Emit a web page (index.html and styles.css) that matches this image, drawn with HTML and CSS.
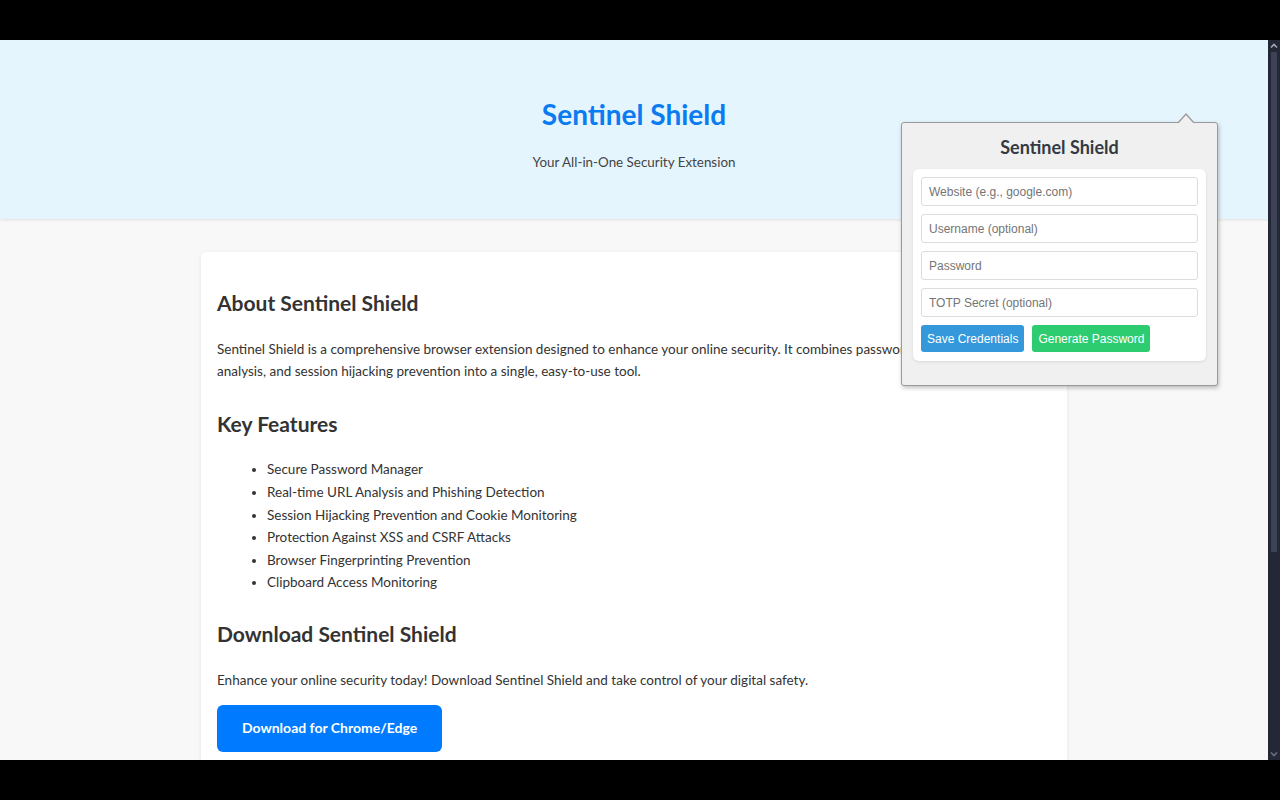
FILE: index.html
```html
<!DOCTYPE html>
<html lang="en">
<head>
<meta charset="utf-8">
<title>Sentinel Shield</title>
<link rel="stylesheet" href="styles.css">
</head>
<body>
<div class="screen">
  <div class="page">
    <header class="hero">
      <h1 class="hero-title">Sentinel Shield</h1>
      <p class="hero-sub">Your All-in-One Security Extension</p>
    </header>
    <main class="main">
      <section class="card">
        <h2>About Sentinel Shield</h2>
        <p>Sentinel Shield is a comprehensive browser extension designed to enhance your online security. It combines password management, URL analysis, and session hijacking prevention into a single, easy-to-use tool.</p>
        <h2>Key Features</h2>
        <ul>
          <li>Secure Password Manager</li>
          <li>Real-time URL Analysis and Phishing Detection</li>
          <li>Session Hijacking Prevention and Cookie Monitoring</li>
          <li>Protection Against XSS and CSRF Attacks</li>
          <li>Browser Fingerprinting Prevention</li>
          <li>Clipboard Access Monitoring</li>
        </ul>
        <h2>Download Sentinel Shield</h2>
        <p>Enhance your online security today! Download Sentinel Shield and take control of your digital safety.</p>
        <a class="download-btn" href="#">Download for Chrome/Edge</a>
      </section>
    </main>

    <div class="popup">
      <h3 class="popup-title">Sentinel Shield</h3>
      <div class="popup-panel">
        <input class="field" type="text" placeholder="Website (e.g., google.com)">
        <input class="field" type="text" placeholder="Username (optional)">
        <input class="field" type="password" placeholder="Password">
        <input class="field" type="text" placeholder="TOTP Secret (optional)">
        <div class="actions">
          <button class="btn btn-save">Save Credentials</button>
          <button class="btn btn-gen">Generate Password</button>
        </div>
      </div>
    </div>
  </div>

  <div class="scrollbar">
    <svg class="sb-arrow" width="12" height="12" viewBox="0 0 12 12"><path d="M3 7.5 L6 4.5 L9 7.5" fill="none" stroke="#a4a9b8" stroke-width="1.6"/></svg>
    <div class="sb-track"><div class="sb-thumb"></div></div>
    <svg class="sb-arrow" width="12" height="12" viewBox="0 0 12 12"><path d="M3 4.5 L6 7.5 L9 4.5" fill="none" stroke="#6b7080" stroke-width="1.6"/></svg>
  </div>
</div>
</body>
</html>
```

FILE: styles.css
```css
html, body {
  margin: 0;
  padding: 0;
  background: #000;
}

body {
  padding: 40px 0;
}

.screen {
  display: flex;
  height: 720px;
}

.page {
  position: relative;
  flex: 1;
  min-width: 0;
  overflow: hidden;
  background: #f8f8f8;
  font-family: Lato, "Noto Sans", sans-serif;
  font-size: 13.5px;
  line-height: 22.6px;
  color: #333;
}

/* fake dark scrollbar */
.scrollbar {
  width: 12px;
  flex: none;
  background: #242836;
  display: flex;
  flex-direction: column;
}
.sb-arrow {
  display: block;
  flex: none;
}
.sb-track {
  flex: 1;
  display: flex;
  justify-content: center;
}
.sb-thumb {
  width: 6px;
  height: 500px;
  background: #3d4357;
  border-radius: 1px;
}

.hero {
  background: #e4f5fe;
  text-align: center;
  height: 179px;
  box-sizing: border-box;
  padding-top: 52px;
  box-shadow: 0 1px 3px rgba(0,0,0,0.1);
}

.hero-title {
  margin: 0;
  font-size: 28px;
  line-height: 44px;
  font-weight: 700;
  color: #0a7bf0;
}

.hero-sub {
  margin: 15px 0 0;
  font-size: 13.4px;
  line-height: 22.4px;
  color: #444;
}

.main {
  padding: 33px 0 60px;
}

.card {
  width: 866px;
  margin: 0 auto;
  box-sizing: border-box;
  background: #fff;
  border-radius: 6px;
  box-shadow: 0 1px 4px rgba(0,0,0,0.08);
  padding: 9px 16px 40px;
}

.card h2 {
  font-size: 21px;
  line-height: 33.6px;
  font-weight: 700;
  color: #333;
  margin: 24px 0 18px;
}

.card h2:first-child {
  margin-top: 25px;
}

.card ul + h2 {
  margin-top: 23px;
}

.card p {
  margin: 0 0 14px;
}

.card ul {
  margin: 17px 0 0;
  padding-left: 50px;
}

.download-btn {
  display: inline-block;
  background: #007bff;
  color: #fff;
  font-size: 14px;
  line-height: 22.4px;
  font-weight: 700;
  text-decoration: none;
  padding: 12px 25px;
  border-radius: 6px;
}

/* extension popup overlay */
.popup {
  position: absolute;
  left: 901px;
  top: 82px;
  width: 317px;
  height: 264px;
  box-sizing: border-box;
  background: #f0f0f0;
  border: 1px solid #9a9a9a;
  border-radius: 3px;
  box-shadow: 1px 2px 4px rgba(0,0,0,0.25);
  padding: 0 11px;
  font-family: "Liberation Sans", Arial, sans-serif;
}

.popup::before,
.popup::after {
  content: "";
  position: absolute;
  width: 0;
  height: 0;
  border-left: 9px solid transparent;
  border-right: 9px solid transparent;
}
.popup::before {
  right: 22px;
  top: -10px;
  border-bottom: 10px solid #9a9a9a;
}
.popup::after {
  right: 23px;
  top: -8px;
  border-left-width: 8px;
  border-right-width: 8px;
  border-bottom: 9px solid #f0f0f0;
}

.popup-title {
  margin: 12px 0 0;
  text-align: center;
  font-family: Lato, "Noto Sans", sans-serif;
  font-size: 18px;
  line-height: 24px;
  font-weight: 700;
  color: #333a44;
}

.popup-panel {
  margin-top: 10px;
  background: #fff;
  border-radius: 6px;
  box-shadow: 0 1px 3px rgba(0,0,0,0.1);
  padding: 8px 8px 9px;
  display: flex;
  flex-direction: column;
  gap: 8px;
}

.field {
  display: block;
  height: 29px;
  box-sizing: border-box;
  border: 1px solid #dddddd;
  border-radius: 3px;
  padding: 0 7px;
  font-family: "Liberation Sans", Arial, sans-serif;
  font-size: 12px;
  color: #333;
  background: #fff;
  outline: none;
}
.field::placeholder {
  color: #757575;
}

.actions {
  display: flex;
  gap: 8px;
}

.btn {
  height: 27px;
  border: 0;
  border-radius: 3px;
  color: #fff;
  font-family: "Liberation Sans", Arial, sans-serif;
  font-size: 12px;
  line-height: normal;
  padding: 0 6px;
  cursor: pointer;
}
.btn-save { background: #3498db; }
.btn-gen { background: #2ecc71; }
```
